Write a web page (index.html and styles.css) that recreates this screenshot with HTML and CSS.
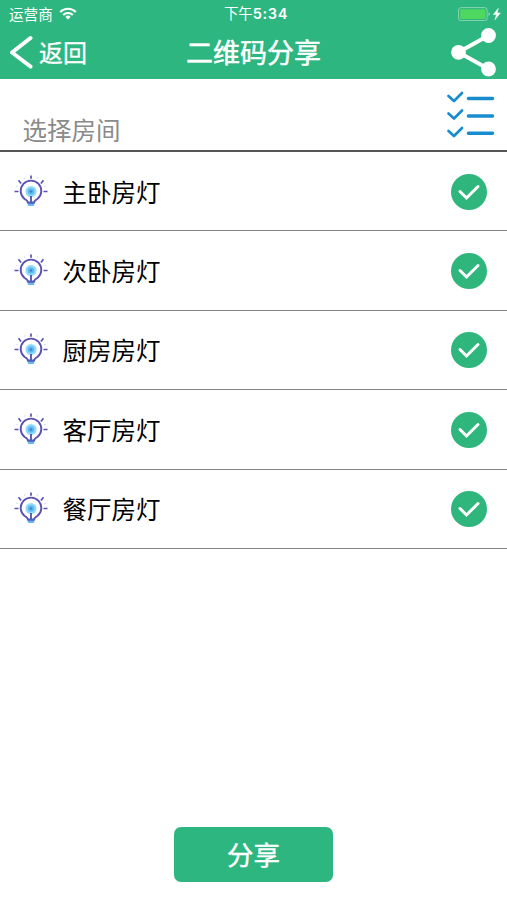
FILE: index.html
```
<!DOCTYPE html>
<html lang="zh-CN">
<head>
<meta charset="utf-8">
<meta name="viewport" content="width=device-width">
<title>二维码分享</title>
<link rel="stylesheet" href="styles.css">
</head>
<body>
<svg class="defs" aria-hidden="true">
  <symbol id="bulb" viewBox="0 0 34 34">
    <g fill="none">
      <path d="M14 28c0-2-.9-2.800-3.400-4A10.300 10.300 0 1 1 23.400 24c-2.500 1.200-3.400 2-3.400 4" stroke="#5b50b4" stroke-width="1.900"/>
      <path d="M17 .5v3.200M4.500 5.300l2.600 3.200M29.500 5.300l-2.600 3.200M.5 16.500h4M29.500 16.500h4" stroke="#5b50b4" stroke-width="1.700"/>
      <path d="M10.500 2.500l.4 1M23.500 2.500l-.4 1M2.500 11.300l1 .3M31.500 11.300l-1 .3" stroke="#c3cdf3" stroke-width="1.200"/>
    </g>
    <circle cx="17" cy="16.500" r="5.600" fill="#8fdcfd"/>
    <circle cx="17" cy="16.500" r="3.300" fill="#5fb9ee"/>
    <circle cx="17" cy="16.500" r="1.300" fill="#4d7fd0"/>
    <path d="M17 21v6" stroke="#4745a6" stroke-width="1.700"/>
    <path d="M13.300 27.700h7.400" stroke="#4b62c0" stroke-width="2.400"/>
    <path d="M14.600 30h4.800" stroke="#66b7ee" stroke-width="2" stroke-linecap="round"/>
  </symbol>
  <symbol id="check" viewBox="0 0 36 36">
    <circle cx="18" cy="18" r="18" fill="#2fb67c"/>
    <path d="M9 17.500l6.500 6.500L27 12.500" fill="none" stroke="#fff" stroke-width="3" stroke-linecap="round"/>
  </symbol>
</svg>
<header class="header">
  <div class="status">
    <div class="carrier">
      <span>运营商</span>
      <svg class="wifi" viewBox="0 0 18 13" fill="none" stroke="#fff" stroke-width="2.200">
        <path d="M1.200 5a11 11 0 0 1 15.600 0M4.200 8a6.800 6.800 0 0 1 9.600 0"/>
        <path d="M9 12.500L6.400 9.900a3.700 3.700 0 0 1 5.200 0z" fill="#fff" stroke="none"/>
      </svg>
    </div>
    <time class="time">下午<b>5:34</b></time>
    <svg class="battery" viewBox="0 0 43 14">
      <rect x=".6" y=".6" width="28.500" height="13" rx="2.500" fill="none" stroke="#87d5b1" stroke-width="1"/>
      <rect x="2.200" y="2.200" width="25.300" height="9.800" rx="1.200" fill="#4fd860"/>
      <path d="M30.500 5v4q1.500-.6 1.500-2t-1.500-2z" fill="#87d5b1"/>
      <path d="M40.300 1.300l-5 6.300h3.200l-1.600 5.200 5.500-6.800h-3.200z" fill="#fff" stroke="#fff" stroke-width=".5"/>
    </svg>
  </div>
  <nav class="nav">
    <a class="back">
      <svg viewBox="0 0 24 34"><path d="M21.500 3L3 17.500 21.500 31.500" fill="none" stroke="#fff" stroke-width="4" stroke-linecap="round" stroke-linejoin="round"/></svg>
      <span>返回</span>
    </a>
    <h1 class="title">二维码分享</h1>
    <svg class="share" viewBox="0 0 46 50">
      <path d="M37.500 8.500L7.500 25.300l30 16.700" fill="none" stroke="#fff" stroke-width="4"/>
      <g fill="#fff"><circle cx="37.500" cy="8.500" r="7.400"/><circle cx="7.500" cy="25.300" r="7.400"/><circle cx="37.500" cy="42" r="7.400"/></g>
    </svg>
  </nav>
</header>
<main>
  <div class="picker">
    <span>选择房间</span>
    <svg class="list-icon" viewBox="0 0 50 50" fill="none" stroke="#188dce" stroke-linecap="round" stroke-linejoin="round">
      <path d="M2.500 7l5.500 5 8-8M2.500 24.500l5.500 5 8-8M2.500 42L8 47l8-8" stroke-width="2.700"/>
      <path d="M22.500 9.500h24M22.500 27h24M22.500 44.200h24" stroke-width="3.600"/>
    </svg>
  </div>
  <ul class="rooms">
    <li><svg class="bulb"><use href="#bulb"/></svg><span>主卧房灯</span><svg class="check"><use href="#check"/></svg></li>
    <li><svg class="bulb"><use href="#bulb"/></svg><span>次卧房灯</span><svg class="check"><use href="#check"/></svg></li>
    <li><svg class="bulb"><use href="#bulb"/></svg><span>厨房房灯</span><svg class="check"><use href="#check"/></svg></li>
    <li><svg class="bulb"><use href="#bulb"/></svg><span>客厅房灯</span><svg class="check"><use href="#check"/></svg></li>
    <li><svg class="bulb"><use href="#bulb"/></svg><span>餐厅房灯</span><svg class="check"><use href="#check"/></svg></li>
  </ul>
</main>
<footer class="footer"><button class="submit">分享</button></footer>
</body>
</html>
```
FILE: styles.css
```
* { box-sizing: border-box; }
body {
  margin: 0;
  height: 900px;
  display: flex;
  flex-direction: column;
  background: #fff;
  color: #000;
  font-family: "Noto Sans CJK SC", sans-serif;
  overflow: hidden;
}
svg { display: block; flex: none; }
.defs { width: 0; height: 0; position: absolute; }
.header { height: 79px; background: #2db67f; color: #fff; }
.status {
  height: 26px;
  display: grid;
  grid-template-columns: 1fr auto 1fr;
  align-items: center;
  padding: 0 6px 0 9px;
  font-size: 14.600px;
  line-height: 25px;
}
.carrier { display: flex; align-items: center; gap: 6px; }
.carrier span { padding-bottom: 1px; }
.wifi { width: 18px; height: 13px; }
.time { padding-left: 2px; font-size: 14.400px; }
.time b { font-family: Inter, sans-serif; font-weight: 600; font-size: 14.600px; letter-spacing: .6px; }
.battery { width: 43px; height: 14px; justify-self: end; }
.nav {
  height: 52px;
  display: grid;
  grid-template-columns: 1fr auto 1fr;
  align-items: center;
  padding: 0 11px 0 9px;
}
.back { display: flex; align-items: center; gap: 6px; font-size: 24px; line-height: 48px; -webkit-text-stroke: .3px #fff; }
.back svg { width: 24px; height: 34px; }
.title { margin: 0; padding: 0 0 0 2px; font-size: 27px; line-height: 48px; font-weight: 400; -webkit-text-stroke: .5px #fff; }
.share { width: 46px; height: 50px; justify-self: end; margin-right: -1px; }
.picker {
  height: 74px;
  display: flex;
  justify-content: space-between;
  padding: 10px 11px 0 22.500px;
  border-bottom: 2px solid #565456;
  margin-top: -1px;
  color: #8a8a8a;
  font-size: 24.500px;
  line-height: 36px;
}
.picker span { padding-top: 24px; }
.list-icon { width: 50px; height: 50px; margin-top: 1px; }
.rooms { margin: 0; padding: 0; list-style: none; }
.rooms li {
  height: 79.400px;
  display: flex;
  align-items: center;
  padding: 1px 20px 0 14px;
  border-bottom: 1.500px solid #858385;
  font-size: 24.500px;
  line-height: 36px;
}
.bulb { width: 34px; height: 34px; }
.rooms span { flex: 1; padding-left: 14.500px; }
.check { width: 36px; height: 36px; }
.footer { margin-top: auto; padding-bottom: 18px; display: flex; justify-content: center; }
.submit {
  width: 159px;
  height: 55px;
  padding: 0 0 2px;
  border: 0;
  border-radius: 7px;
  background: #2db67f;
  color: #fff;
  font: 26.500px/53px "Noto Sans CJK SC", sans-serif;
  -webkit-text-stroke: .4px #fff;
}
```
